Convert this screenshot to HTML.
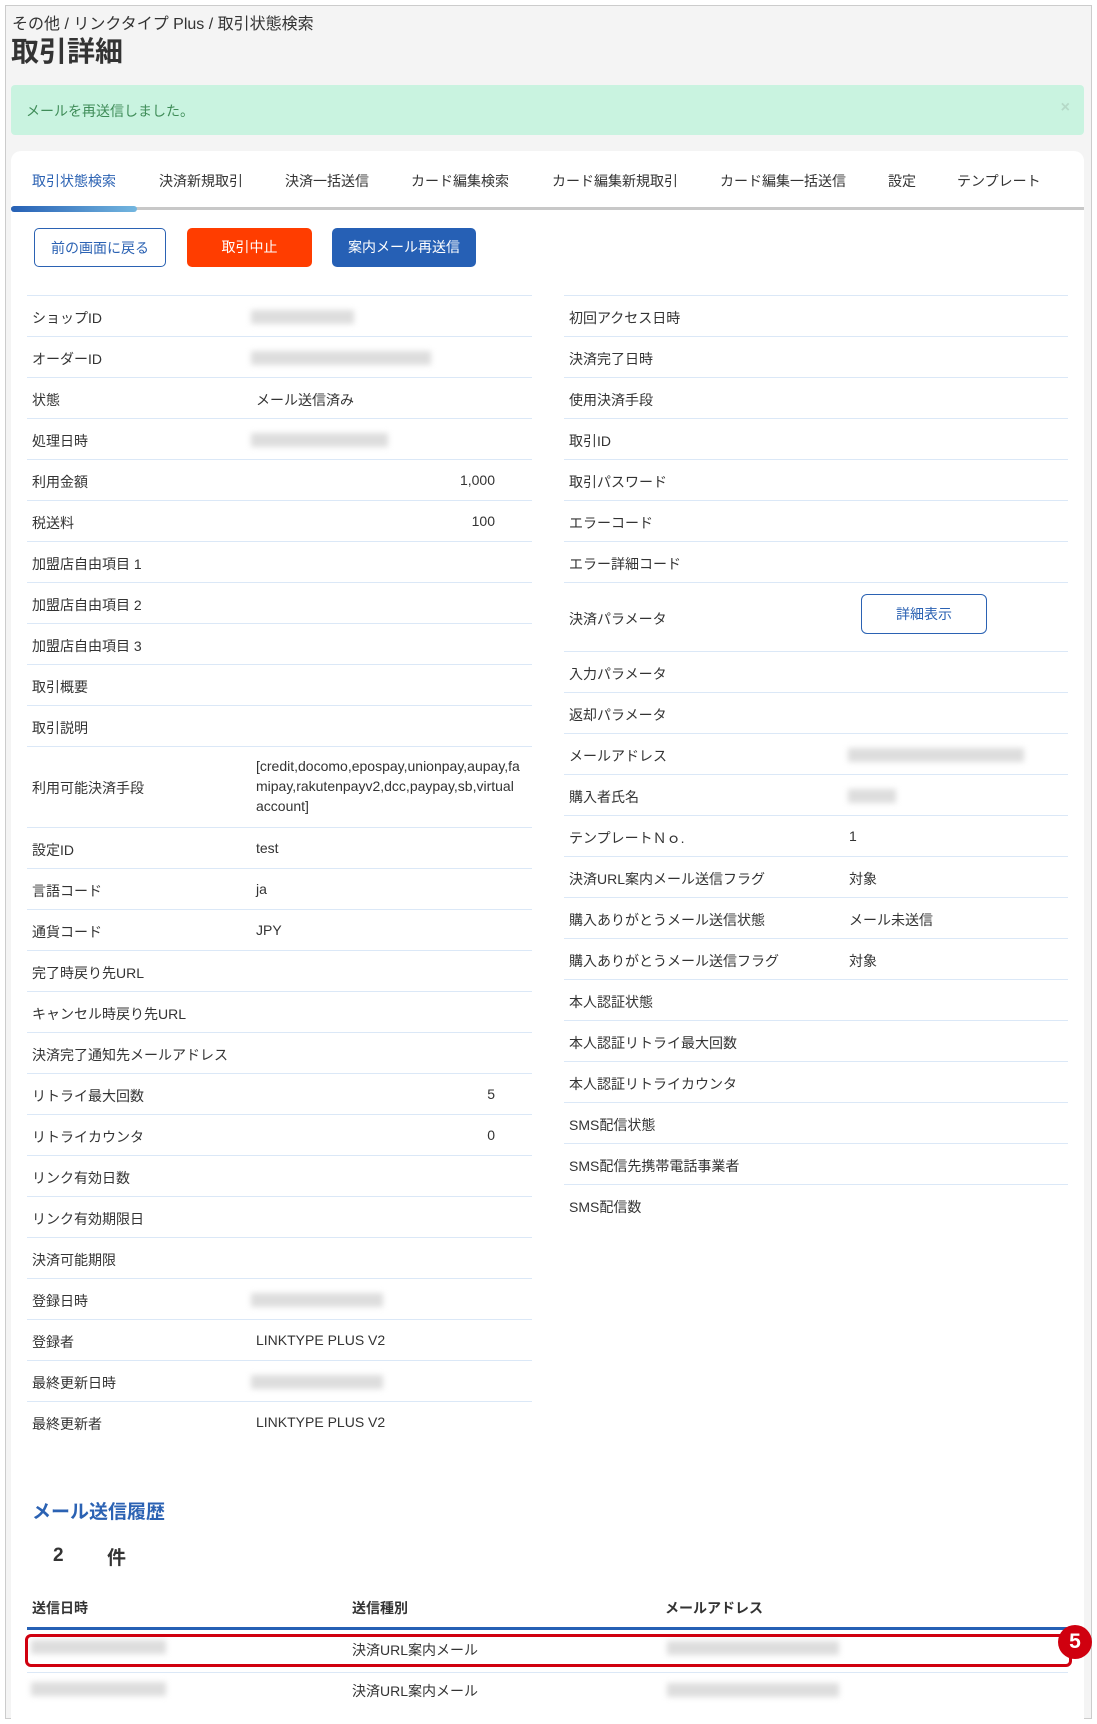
<!DOCTYPE html>
<html><head><meta charset="utf-8"><style>
*{box-sizing:border-box;margin:0;padding:0}
body{width:1097px;height:1724px;background:#fff;font-family:"Liberation Sans","Noto Sans CJK JP",sans-serif;color:#333;font-size:14px;position:relative;overflow:hidden}
.page{position:absolute;left:5px;top:5px;width:1087px;height:1714px;background:#f4f4f4;border:1px solid #ccc}
.a{position:absolute}
.crumb{left:6px;top:4px;font-size:16px;color:#333}
.title{left:5px;top:24px;font-size:28px;font-weight:bold;color:#333}
.alert{left:5px;top:79px;width:1073px;height:50px;background:#c9f3e0;border-radius:4px;color:#3f8c58;font-size:14px;padding:16px 15px}
.alert .x{position:absolute;right:14px;top:14px;color:#b5d9c7;font-weight:bold;font-size:16px}
.card{left:5px;top:145px;width:1073px;height:1568px;background:#fff;border-radius:10px 10px 0 0}
.tabs{left:0;top:0;width:1073px;height:59px;border-bottom:3px solid #c8c8c8}
.tab{position:absolute;top:20px;font-size:14px;color:#333}
.tab.on{color:#2b62b3}
.ul{left:0;top:55px;width:126px;height:6px;border-radius:3px;background:linear-gradient(90deg,#2660b5,#73b6df)}
.btn{position:absolute;top:77px;height:39px;border-radius:5px;font-size:14px;text-align:center;line-height:39px}
.rows{position:absolute}
.row{border-top:1px solid #dbe8f7;height:41px;position:relative}
.row span{position:absolute;top:12px}
.l{left:5px}.v{left:229px}.r{right:37px}
.blur{position:absolute;background:#ddd;filter:blur(3px);height:14px}
</style></head><body>
<div class="page">
<div class="a crumb">その他 / リンクタイプ Plus / 取引状態検索</div>
<div class="a title">取引詳細</div>
<div class="a alert">メールを再送信しました。<span class="x">×</span></div>
<div class="a card">
 <div class="a tabs">
  <span class="tab on" style="left:21px">取引状態検索</span>
  <span class="tab" style="left:148px">決済新規取引</span>
  <span class="tab" style="left:274px">決済一括送信</span>
  <span class="tab" style="left:400px">カード編集検索</span>
  <span class="tab" style="left:541px">カード編集新規取引</span>
  <span class="tab" style="left:709px">カード編集一括送信</span>
  <span class="tab" style="left:877px">設定</span>
  <span class="tab" style="left:946px">テンプレート</span>
  <div class="a ul"></div>
 </div>
 <div class="btn" style="left:23px;width:132px;border:1px solid #2b62b3;color:#2b62b3">前の画面に戻る</div>
 <div class="btn" style="left:176px;width:125px;background:#ff3d00;color:#fff">取引中止</div>
 <div class="btn" style="left:321px;width:144px;background:#2660b5;color:#fff">案内メール再送信</div>

 <div class="rows" style="left:16px;top:144px;width:505px">
  <div class="row"><span class="l">ショップID</span><div class="blur" style="left:224px;top:14px;width:103px"></div></div>
  <div class="row"><span class="l">オーダーID</span><div class="blur" style="left:224px;top:14px;width:180px"></div></div>
  <div class="row"><span class="l">状態</span><span class="v">メール送信済み</span></div>
  <div class="row"><span class="l">処理日時</span><div class="blur" style="left:224px;top:14px;width:137px"></div></div>
  <div class="row"><span class="l">利用金額</span><span class="r">1,000</span></div>
  <div class="row"><span class="l">税送料</span><span class="r">100</span></div>
  <div class="row"><span class="l">加盟店自由項目 1</span></div>
  <div class="row"><span class="l">加盟店自由項目 2</span></div>
  <div class="row"><span class="l">加盟店自由項目 3</span></div>
  <div class="row"><span class="l">取引概要</span></div>
  <div class="row"><span class="l">取引説明</span></div>
  <div class="row" style="height:81px"><span class="l" style="top:31px">利用可能決済手段</span><span class="v" style="top:9px;width:270px;line-height:20px">[credit,docomo,epospay,unionpay,aupay,fa mipay,rakutenpayv2,dcc,paypay,sb,virtual account]</span></div>
  <div class="row"><span class="l">設定ID</span><span class="v">test</span></div>
  <div class="row"><span class="l">言語コード</span><span class="v">ja</span></div>
  <div class="row"><span class="l">通貨コード</span><span class="v">JPY</span></div>
  <div class="row"><span class="l">完了時戻り先URL</span></div>
  <div class="row"><span class="l">キャンセル時戻り先URL</span></div>
  <div class="row"><span class="l">決済完了通知先メールアドレス</span></div>
  <div class="row"><span class="l">リトライ最大回数</span><span class="r">5</span></div>
  <div class="row"><span class="l">リトライカウンタ</span><span class="r">0</span></div>
  <div class="row"><span class="l">リンク有効日数</span></div>
  <div class="row"><span class="l">リンク有効期限日</span></div>
  <div class="row"><span class="l">決済可能期限</span></div>
  <div class="row"><span class="l">登録日時</span><div class="blur" style="left:224px;top:14px;width:132px"></div></div>
  <div class="row"><span class="l">登録者</span><span class="v">LINKTYPE PLUS V2</span></div>
  <div class="row"><span class="l">最終更新日時</span><div class="blur" style="left:224px;top:14px;width:132px"></div></div>
  <div class="row"><span class="l">最終更新者</span><span class="v">LINKTYPE PLUS V2</span></div>
 </div>

 <div class="rows" style="left:553px;top:144px;width:504px">
  <div class="row"><span class="l">初回アクセス日時</span></div>
  <div class="row"><span class="l">決済完了日時</span></div>
  <div class="row"><span class="l">使用決済手段</span></div>
  <div class="row"><span class="l">取引ID</span></div>
  <div class="row"><span class="l">取引パスワード</span></div>
  <div class="row"><span class="l">エラーコード</span></div>
  <div class="row"><span class="l">エラー詳細コード</span></div>
  <div class="row" style="height:69px"><span class="l" style="top:26px">決済パラメータ</span><div style="position:absolute;left:297px;top:11px;width:126px;height:40px;border:1px solid #2b62b3;border-radius:6px;color:#2b62b3;text-align:center;line-height:38px">詳細表示</div></div>
  <div class="row"><span class="l">入力パラメータ</span></div>
  <div class="row"><span class="l">返却パラメータ</span></div>
  <div class="row"><span class="l">メールアドレス</span><div class="blur" style="left:284px;top:14px;width:176px"></div></div>
  <div class="row"><span class="l">購入者氏名</span><div class="blur" style="left:284px;top:14px;width:48px"></div></div>
  <div class="row"><span class="l">テンプレートＮｏ.</span><span class="v" style="left:285px">1</span></div>
  <div class="row"><span class="l">決済URL案内メール送信フラグ</span><span class="v" style="left:285px">対象</span></div>
  <div class="row"><span class="l">購入ありがとうメール送信状態</span><span class="v" style="left:285px">メール未送信</span></div>
  <div class="row"><span class="l">購入ありがとうメール送信フラグ</span><span class="v" style="left:285px">対象</span></div>
  <div class="row"><span class="l">本人認証状態</span></div>
  <div class="row"><span class="l">本人認証リトライ最大回数</span></div>
  <div class="row"><span class="l">本人認証リトライカウンタ</span></div>
  <div class="row"><span class="l">SMS配信状態</span></div>
  <div class="row"><span class="l">SMS配信先携帯電話事業者</span></div>
  <div class="row"><span class="l">SMS配信数</span></div>
 </div>

 <div class="a" style="left:21px;top:1346px;font-size:19px;font-weight:bold;color:#2b62b3">メール送信履歴</div>
 <div class="a" style="left:42px;top:1394px;font-size:19px;font-weight:bold;color:#333">2</div>
 <div class="a" style="left:96px;top:1392px;font-size:19px;font-weight:bold;color:#333">件</div>
 <div class="a" style="left:21px;top:1447px;font-weight:bold;font-size:14px">送信日時</div>
 <div class="a" style="left:341px;top:1447px;font-weight:bold;font-size:14px">送信種別</div>
 <div class="a" style="left:654px;top:1447px;font-weight:bold;font-size:14px">メールアドレス</div>
 <div class="a" style="left:16px;top:1476px;width:1041px;height:3px;background:#2660b5"></div>
 <div class="a" style="left:16px;top:1521px;width:1041px;height:1px;background:#dbe8f7"></div>
 <div class="blur" style="left:20px;top:1489px;width:135px"></div>
 <div class="a" style="left:341px;top:1489px">決済URL案内メール</div>
 <div class="blur" style="left:656px;top:1490px;width:172px"></div>
 <div class="blur" style="left:20px;top:1531px;width:135px"></div>
 <div class="a" style="left:341px;top:1530px">決済URL案内メール</div>
 <div class="blur" style="left:656px;top:1532px;width:172px"></div>
 <div class="a" style="left:14px;top:1483px;width:1047px;height:33px;border:3px solid #d0000f;border-radius:6px"></div>
 <div class="a" style="left:1047px;top:1474px;width:34px;height:34px;border-radius:50%;background:#d0000f;color:#fff;font-weight:bold;font-size:21px;text-align:center;line-height:34px">5</div>
</div>
</div>
</body></html>
